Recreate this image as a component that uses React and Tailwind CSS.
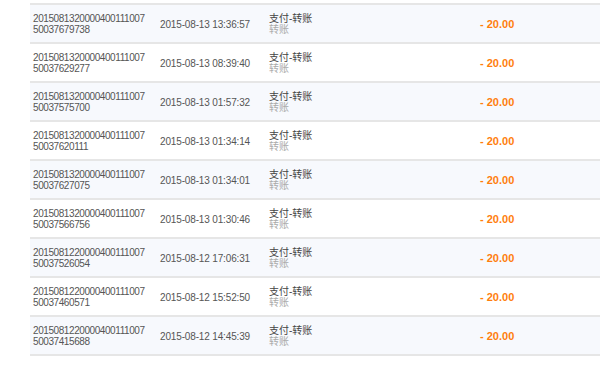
const rows = [
  ['2015081320000400111007', '50037679738', '2015-08-13 13:36:57'],
  ['2015081320000400111007', '50037629277', '2015-08-13 08:39:40'],
  ['2015081320000400111007', '50037575700', '2015-08-13 01:57:32'],
  ['2015081320000400111007', '50037620111', '2015-08-13 01:34:14'],
  ['2015081320000400111007', '50037627075', '2015-08-13 01:34:01'],
  ['2015081320000400111007', '50037566756', '2015-08-13 01:30:46'],
  ['2015081220000400111007', '50037526054', '2015-08-12 17:06:31'],
  ['2015081220000400111007', '50037460571', '2015-08-12 15:52:50'],
  ['2015081220000400111007', '50037415688', '2015-08-12 14:45:39'],
];

export default function App() {
  return (
    <div
      className="w-[600px] h-[366px] bg-white overflow-hidden pl-[30px] pt-[3px]"
      style={{ fontFamily: '"Liberation Sans", "Noto Sans CJK SC", sans-serif' }}
    >
      <div className="border-t-2 border-[#e6e6e6]">
        {rows.map(([id1, id2, time], i) => (
          <div
            key={i}
            className={`flex items-center h-[39px] border-b-2 border-[#e6e6e6] ${
              i % 2 === 0 ? 'bg-[#f7f9fd]' : 'bg-white'
            }`}
          >
            <div className="w-[130px] pl-[3px] text-[10px] leading-[11px] text-[#555] tracking-[-0.42px]">
              <div>{id1}</div>
              <div>{id2}</div>
            </div>
            <div className="w-[109px] text-[10px] text-[#555] tracking-[-0.15px] pt-[1px]">{time}</div>
            <div className="w-[211px] text-[10px] leading-[11px]">
              <div className="text-[#444]">支付-转账</div>
              <div className="text-[#aaa]">转账</div>
            </div>
            <div className="text-[11px] font-bold text-[#ff7e0d] pt-[1px]">- 20.00</div>
          </div>
        ))}
      </div>
    </div>
  );
}
